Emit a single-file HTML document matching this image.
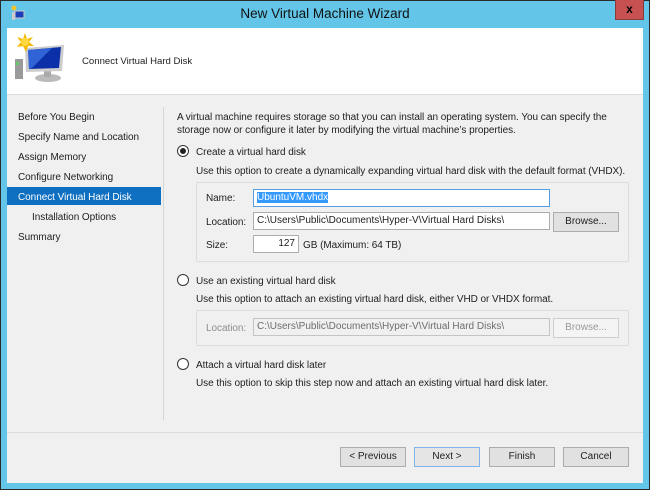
<!DOCTYPE html>
<html><head><style>
*{margin:0;padding:0;box-sizing:border-box}
body{width:650px;height:490px;background:#2b2b2b;position:relative;overflow:hidden;font-family:"Liberation Sans",sans-serif;font-size:10px;color:#1e1e1e}
.a{position:absolute;white-space:nowrap}
.t{line-height:12px;margin-top:2px;letter-spacing:-0.05px}
.inp{position:absolute;background:#fff;border:1px solid #acacac;height:18px;line-height:16px;padding-left:3px}
.btn{position:absolute;background:#e1e1e1;border:1px solid #adadad;height:20px;line-height:18px;text-align:center}
.rad{position:absolute;width:12px;height:12px;border:1px solid #333;border-radius:50%;background:#fff;margin-top:2px}
</style></head><body>
<div class="a" style="left:1px;top:0;width:648px;height:489px;background:#63c6e8"></div>
<div class="a" style="left:0;top:0;width:650px;height:1px;background:#2b2b2b"></div>
<svg class="a" style="left:9px;top:5px" width="16" height="16" viewBox="0 0 16 16"><circle cx="5" cy="3" r="2.5" fill="#f4c430"/><rect x="3" y="7" width="3" height="8" fill="#ccc"/><rect x="6" y="6" width="9" height="7" fill="#1a3fb8" stroke="#ccc"/></svg>
<div class="a" style="left:0;width:650px;top:6px;text-align:center;font-size:13.5px;color:#111">New Virtual Machine Wizard</div>
<div class="a" style="left:615px;top:0;width:29px;height:20px;background:#c75050;border:1px solid #8c3a3a;border-top:none;color:#000;text-align:center;font-weight:bold;font-size:12px;line-height:18px">x</div>
<div class="a" style="left:7px;top:28px;width:636px;height:455px;background:#f0f0f0"></div>
<div class="a" style="left:7px;top:28px;width:636px;height:67px;background:#fff;border-bottom:1px solid #dcdcdc"></div>
<svg class="a" style="left:12px;top:31px" width="56" height="54" viewBox="0 0 56 54">
<rect x="3" y="28" width="8" height="20" fill="#9a9a9a"/><rect x="4" y="31" width="3" height="3" fill="#6c6"/>
<ellipse cx="36" cy="47" rx="13" ry="4" fill="#bbb"/><rect x="32" y="38" width="7" height="8" fill="#aaa"/>
<path d="M13 17 L52 14 L50 40 L14 41 Z" fill="#ccc"/><path d="M16 19 L49 16 L47 37 L17 38 Z" fill="#0b2fa8"/><path d="M16 19 L40 17 L20 37 L17 38Z" fill="#3a70e0" opacity=".8"/>
<polygon points="13,2 15,8 21,6 17,11 22,15 16,15 14,21 11,15 5,16 9,11 5,6 11,8" fill="#f5b800"/><circle cx="13" cy="11" r="4" fill="#ffd840"/>
</svg>
<div class="a" style="left:82px;top:56px;font-size:9.6px">Connect Virtual Hard Disk</div>
<div class="a t" style="left:18px;top:110px">Before You Begin</div>
<div class="a t" style="left:18px;top:130px">Specify Name and Location</div>
<div class="a t" style="left:18px;top:150px">Assign Memory</div>
<div class="a t" style="left:18px;top:170px">Configure Networking</div>
<div class="a" style="left:7px;top:187px;width:154px;height:18px;background:#0f6fc0"></div>
<div class="a t" style="left:18px;top:190px;color:#fff">Connect Virtual Hard Disk</div>
<div class="a t" style="left:32px;top:210px">Installation Options</div>
<div class="a t" style="left:18px;top:230px">Summary</div>
<div class="a" style="left:163px;top:107px;width:1px;height:313px;background:#d5d5d5"></div>
<div class="a t" style="left:177px;top:110px">A virtual machine requires storage so that you can install an operating system. You can specify the</div>
<div class="a t" style="left:177px;top:123px">storage now or configure it later by modifying the virtual machine’s properties.</div>
<div class="rad" style="left:177px;top:143px"></div><div class="a" style="left:180px;top:148px;width:6px;height:6px;border-radius:50%;background:#222"></div>
<div class="a t" style="left:196px;top:145px">Create a virtual hard disk</div>
<div class="a t" style="left:196px;top:164px">Use this option to create a dynamically expanding virtual hard disk with the default format (VHDX).</div>
<div class="a" style="left:196px;top:182px;width:433px;height:80px;border:1px solid #dcdcdc;border-radius:2px"></div>
<div class="a t" style="left:206px;top:191px">Name:</div>
<div class="inp" style="left:253px;top:189px;width:297px;border-color:#569de5"><span style="background:#3399ff;color:#fff">UbuntuVM.vhdx</span></div>
<div class="a t" style="left:206px;top:215px">Location:</div>
<div class="inp" style="left:253px;top:212px;width:297px">C:\Users\Public\Documents\Hyper-V\Virtual Hard Disks\</div>
<div class="btn" style="left:553px;top:212px;width:66px">Browse...</div>
<div class="a t" style="left:206px;top:238px">Size:</div>
<div class="inp" style="left:253px;top:235px;width:46px;text-align:right;padding-right:3px">127</div>
<div class="a t" style="left:303px;top:238px">GB (Maximum: 64 TB)</div>
<div class="rad" style="left:177px;top:272px"></div>
<div class="a t" style="left:196px;top:274px">Use an existing virtual hard disk</div>
<div class="a t" style="left:196px;top:292px">Use this option to attach an existing virtual hard disk, either VHD or VHDX format.</div>
<div class="a" style="left:196px;top:310px;width:433px;height:36px;border:1px solid #dcdcdc;border-radius:2px"></div>
<div class="a t" style="left:206px;top:321px;color:#8d8d8d">Location:</div>
<div class="inp" style="left:253px;top:318px;width:297px;background:#f0f0f0;border-color:#c4c4c4;color:#6d6d6d">C:\Users\Public\Documents\Hyper-V\Virtual Hard Disks\</div>
<div class="btn" style="left:553px;top:318px;width:66px;background:#f4f4f4;border-color:#cfcfcf;color:#9a9a9a">Browse...</div>
<div class="rad" style="left:177px;top:356px"></div>
<div class="a t" style="left:196px;top:358px">Attach a virtual hard disk later</div>
<div class="a t" style="left:196px;top:376px">Use this option to skip this step now and attach an existing virtual hard disk later.</div>
<div class="a" style="left:7px;top:432px;width:636px;height:1px;background:#dcdcdc"></div>
<div class="btn" style="left:340px;top:447px;width:66px">&lt; Previous</div>
<div class="btn" style="left:414px;top:447px;width:66px;border-color:#7eb4ea;background:#e5e5e5">Next &gt;</div>
<div class="btn" style="left:489px;top:447px;width:66px">Finish</div>
<div class="btn" style="left:563px;top:447px;width:66px">Cancel</div>
</body></html>
